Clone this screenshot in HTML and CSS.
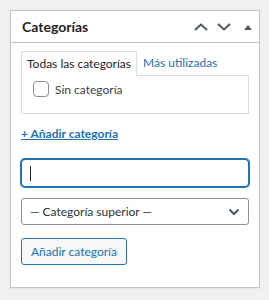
FILE: index.html
```html
<!DOCTYPE html>
<html lang="es">
<head>
    <meta charset="UTF-8">
    <meta name="viewport" content="width=device-width, initial-scale=1.0">
    <title>Categorías</title>
    <link rel="stylesheet" href="styles.css">
</head>
<body>
    <div class="postbox">
        <div class="postbox-header">
            <h2>Categorías</h2>
            <div class="handle-actions">
                <button class="handle" aria-label="Subir">
                    <svg width="14" height="8" viewBox="0 0 14 8"><path d="M1 7 L7 1.5 L13 7" fill="none" stroke="#50575e" stroke-width="2"/></svg>
                </button>
                <button class="handle" aria-label="Bajar">
                    <svg width="14" height="8" viewBox="0 0 14 8"><path d="M1 1 L7 6.5 L13 1" fill="none" stroke="#50575e" stroke-width="2"/></svg>
                </button>
                <button class="handle toggle" aria-label="Cerrar">
                    <svg width="8" height="5" viewBox="0 0 8 5"><path d="M0 5 L4 0 L8 5 Z" fill="#50575e"/></svg>
                </button>
            </div>
        </div>
        <div class="inside">
            <ul class="tabs">
                <li class="tab active">Todas las categorías</li>
                <li class="tab"><a href="#">Más utilizadas</a></li>
            </ul>
            <div class="tabs-panel">
                <label class="check-row">
                    <input type="checkbox">
                    <span>Sin categoría</span>
                </label>
            </div>
            <a href="#" class="add-toggle">+ Añadir categoría</a>
            <div class="add-form">
                <div class="field">
                    <input type="text" class="new-cat">
                    <span class="caret"></span>
                </div>
                <div class="select">
                    <span>— Categoría superior —</span>
                    <svg width="12" height="8" viewBox="0 0 12 8"><path d="M1.5 1.5 L6 6 L10.5 1.5" fill="none" stroke="#50575e" stroke-width="2"/></svg>
                </div>
                <button class="button">Añadir categoría</button>
            </div>
        </div>
    </div>
</body>
</html>
```

FILE: styles.css
```css
/* Base */
body {
    margin: 0;
    padding: 10px;
    background: #f0f0f1;
    font-family: 'Lato', 'Noto Sans', sans-serif;
    font-size: 12px;
    color: #3c434a;
}

/* Box */
.postbox {
    width: 248px;
    background: #fff;
    border: 1px solid #c3c4c7;
    box-shadow: 0 1px 1px rgba(0, 0, 0, 0.04);
}
.postbox-header {
    height: 31px;
    display: flex;
    align-items: center;
    justify-content: space-between;
    border-bottom: 1px solid #c3c4c7;
    padding-left: 11px;
}
.postbox-header h2 {
    margin: 0;
    font-size: 14px;
    font-weight: 700;
    color: #1d2327;
}
.handle-actions {
    display: flex;
    align-items: center;
    padding-right: 7px;
}
.handle {
    border: none;
    background: none;
    padding: 0;
    height: 31px;
    display: flex;
    align-items: center;
    justify-content: center;
    margin-left: 9px;
}
.handle.toggle {
    margin-left: 13px;
    padding-top: 2px;
}

/* Inside */
.inside {
    padding: 7px 10px 22px 10px;
}
.tabs {
    list-style: none;
    margin: 0;
    padding: 0;
    display: flex;
    white-space: nowrap;
}
.tab {
    height: 24px;
    padding: 0 5px;
    line-height: 24px;
    border: 1px solid transparent;
    border-bottom: none;
}
.tab.active {
    border-color: #dcdcde;
    color: #1d2327;
    position: relative;
    top: 1px;
    background: #fff;
}
.tab a {
    color: #2271b1;
    text-decoration: none;
}
.tabs-panel {
    height: 39px;
    box-sizing: border-box;
    border: 1px solid #dcdcde;
    padding: 5px 11px;
}
.check-row {
    display: flex;
    align-items: center;
    gap: 6px;
    color: #3c434a;
}
.check-row input {
    appearance: none;
    width: 16px;
    height: 16px;
    margin: 0;
    border: 1px solid #8c8f94;
    border-radius: 4px;
    background: #fff;
}

.add-toggle {
    display: inline-block;
    margin-top: 12px;
    color: #2271b1;
    font-weight: 700;
    text-decoration: underline;
}

.add-form {
    display: flex;
    flex-direction: column;
    align-items: flex-start;
    margin-top: 18px;
}
.field {
    position: relative;
}
.new-cat {
    display: block;
    width: 228px;
    height: 28px;
    box-sizing: border-box;
    margin: 0;
    border: 1px solid #2271b1;
    border-radius: 4px;
    box-shadow: 0 0 0 1px #2271b1;
    outline: none;
    font: inherit;
    padding: 0 8px;
}
.caret {
    position: absolute;
    left: 9px;
    top: 7px;
    width: 1px;
    height: 15px;
    background: #1d2327;
}
.select {
    margin-top: 11px;
    width: 228px;
    height: 27px;
    box-sizing: border-box;
    border: 1px solid #8c8f94;
    border-radius: 3px;
    display: flex;
    align-items: center;
    justify-content: space-between;
    padding: 0 8px;
    color: #2c3338;
}
.button {
    margin-top: 13px;
    height: 27px;
    padding: 0 9px;
    border: 1px solid #2271b1;
    border-radius: 3px;
    background: #f6f7f7;
    color: #2271b1;
    font: inherit;
}
```
